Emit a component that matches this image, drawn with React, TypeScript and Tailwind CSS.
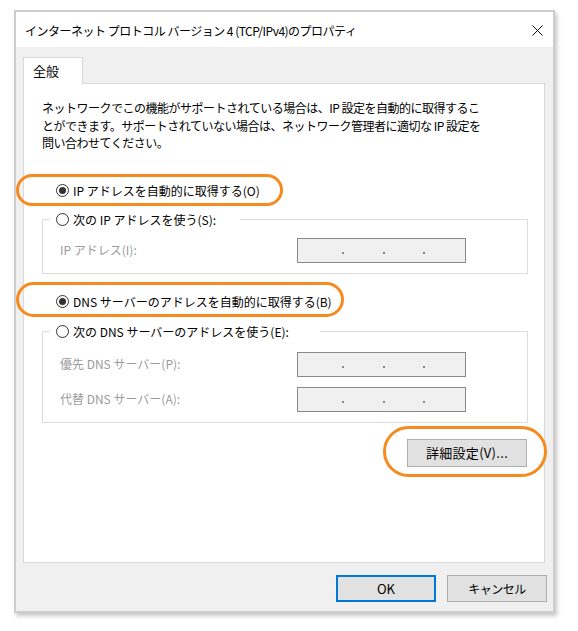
import React from 'react'

const font = "font-['Noto_Sans_CJK_JP',sans-serif]"

function Radio({ checked }: { checked?: boolean }) {
  return (
    <span className="flex h-[13px] w-[13px] shrink-0 items-center justify-center rounded-full border border-[#333333] bg-white">
      {checked && <span className="h-[7px] w-[7px] rounded-full bg-[#333333]" />}
    </span>
  )
}

function RadioRow({ checked, label }: { checked?: boolean; label: string }) {
  return (
    <div className="flex h-[18px] items-center gap-[4px]">
      <Radio checked={checked} />
      <span className="tracking-normal text-black">{label}</span>
    </div>
  )
}

function IpInput() {
  return (
    <div className="flex h-[25px] w-[169px] items-end border border-[#8a8a8a] bg-[#f0f0f0] pb-[8px]">
      <span className="w-[44px]" />
      <span className="h-[2px] w-[2px] bg-[#8a8a8a]" />
      <span className="w-[39px]" />
      <span className="h-[2px] w-[2px] bg-[#8a8a8a]" />
      <span className="w-[38px]" />
      <span className="h-[2px] w-[2px] bg-[#8a8a8a]" />
    </div>
  )
}

function Field({ label }: { label: string }) {
  return (
    <div className="flex items-center">
      <span className="w-[237px] tracking-normal text-[#9b9b9b]">{label}</span>
      <IpInput />
    </div>
  )
}

function Oval({ className }: { className: string }) {
  return (
    <span
      className={`pointer-events-none absolute rounded-full border-[3px] border-[#f68a1e] ${className}`}
    />
  )
}

export default function App() {
  return (
    <div className={`min-h-screen bg-white pl-[14px] pt-[10px] text-[12px] tracking-[-0.5px] ${font}`}>
      <div className="relative w-[541px] border-2 border-[#cdcdcd] shadow-[2px_3px_4px_rgba(0,0,0,0.22)]">
        {/* title bar */}
        <div className="flex h-[35px] items-center justify-between bg-white pl-[9px] pr-[10px] pt-[2px]">
          <span className="text-black">インターネット プロトコル バージョン 4 (TCP/IPv4)のプロパティ</span>
          <svg width="11" height="11" viewBox="0 0 11 11">
            <path d="M0.5 0.5L10.5 10.5M10.5 0.5L0.5 10.5" stroke="#111" strokeWidth="1" />
          </svg>
        </div>

        {/* body */}
        <div className="bg-[#f0f0f0] pb-[9px] pt-[10px]">
          <div className="ml-[7px] mr-[8px]">
            <div className="relative z-10 -mb-px flex h-[27px] w-[60px] border border-b-0 border-[#d9d9d9] bg-white pl-[9px] pt-[3px] text-[13px] tracking-normal text-black">
              全般
            </div>
            <div className="h-[480px] border border-[#d9d9d9] bg-white pl-[18px] pr-[16px] pt-[15px]">
              <p className="leading-[17.5px] text-black">
                ネットワークでこの機能がサポートされている場合は、IP 設定を自動的に取得するこ
                <br />
                とができます。サポートされていない場合は、ネットワーク管理者に適切な IP 設定を
                <br />
                問い合わせてください。
              </p>

              <div className="ml-[14px] mt-[30px]">
                <RadioRow checked label="IP アドレスを自動的に取得する(O)" />
              </div>

              <fieldset className="mt-[11px] border border-[#dcdcdc]">
                <legend className="ml-[7px] w-[190px] bg-white pl-[6px]">
                  <RadioRow label="次の IP アドレスを使う(S):" />
                </legend>
                <div className="pb-[10px] pl-[17px] pt-[9px]">
                  <Field label="IP アドレス(I):" />
                </div>
              </fieldset>

              <div className="ml-[14px] mt-[19px]">
                <RadioRow checked label="DNS サーバーのアドレスを自動的に取得する(B)" />
              </div>

              <fieldset className="mt-[12px] border border-[#dcdcdc]">
                <legend className="ml-[7px] w-[270px] bg-white pl-[6px]">
                  <RadioRow label="次の DNS サーバーのアドレスを使う(E):" />
                </legend>
                <div className="flex flex-col gap-[10px] pb-[10px] pl-[17px] pt-[11px]">
                  <Field label="優先 DNS サーバー(P):" />
                  <Field label="代替 DNS サーバー(A):" />
                </div>
              </fieldset>

              <div className="mt-[16px] flex justify-end pr-[1px]">
                <button className="h-[28px] w-[120px] border border-[#adadad] bg-[#e1e1e1] text-[13px] tracking-[0.3px] text-black">
                  詳細設定(V)...
                </button>
              </div>
            </div>
          </div>

          <div className="mt-[12px] flex justify-end gap-[11px] pr-[6px]">
            <button className="h-[27px] w-[100px] border-2 border-[#0078d7] bg-[#e1e1e1] text-[13px] tracking-normal text-black">
              OK
            </button>
            <button className="h-[27px] w-[100px] border border-[#adadad] bg-[#e1e1e1] text-black">
              キャンセル
            </button>
          </div>
        </div>

        {/* annotations */}
        <Oval className="left-0 top-[162px] h-[32px] w-[267px]" />
        <Oval className="left-0 top-[270px] h-[35px] w-[328px]" />
        <Oval className="left-[367px] top-[414px] h-[51px] w-[164px]" />
      </div>
    </div>
  )
}
